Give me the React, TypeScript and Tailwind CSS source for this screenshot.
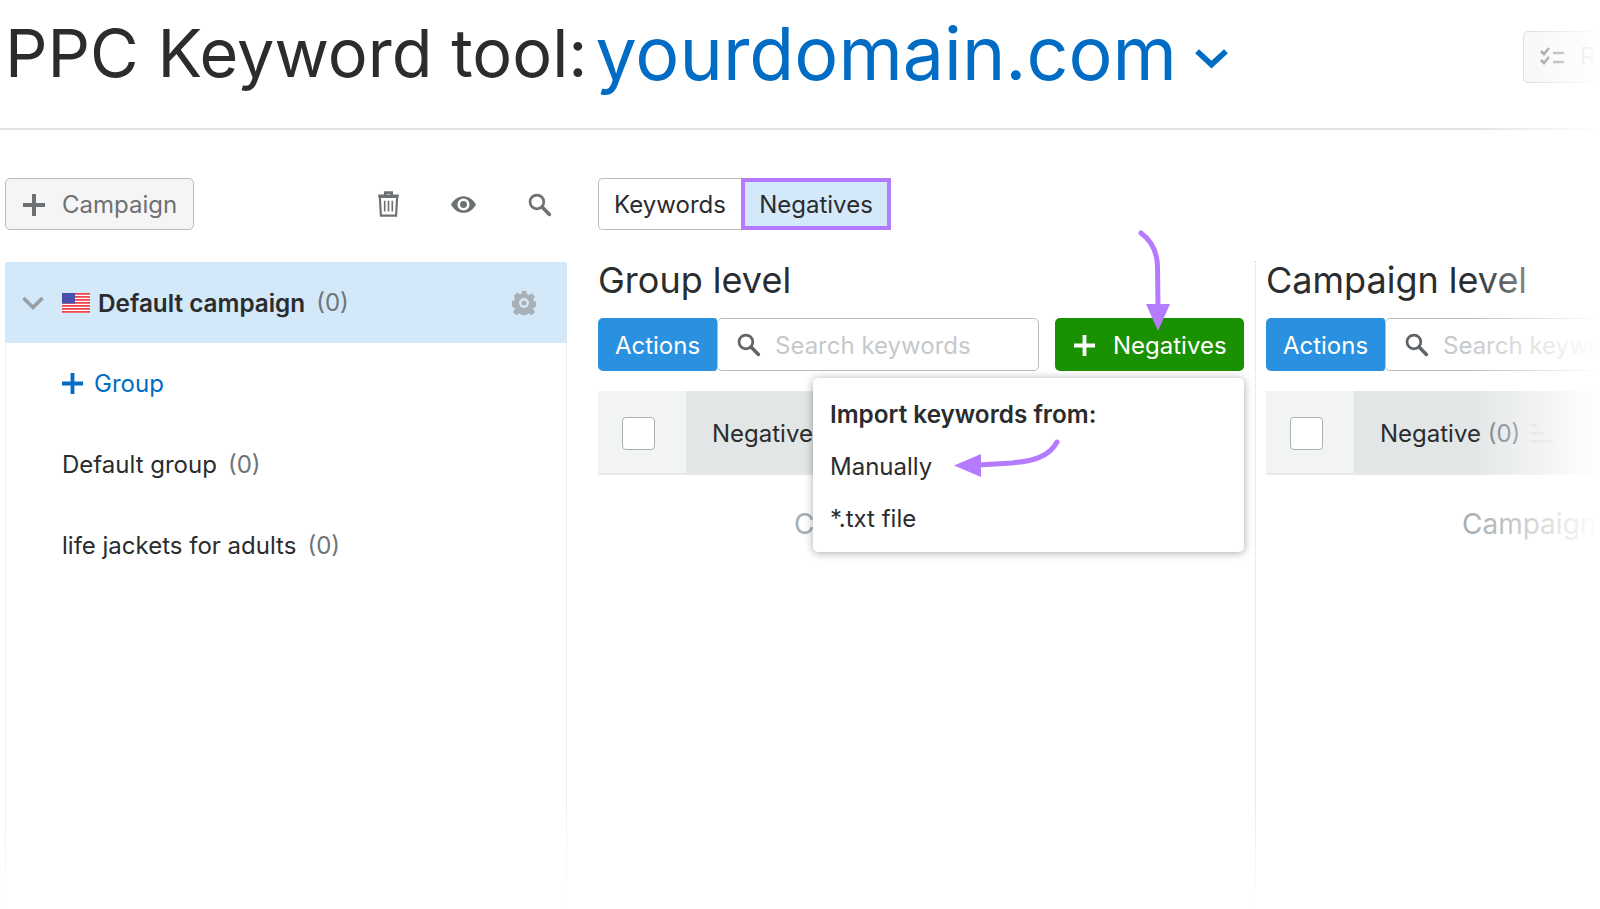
import React from "react";

const Search = ({ className = "" }: { className?: string }) => (
  <svg viewBox="0 0 24 24" className={className} fill="none" stroke="currentColor" strokeWidth="2.6">
    <circle cx="9.5" cy="9.5" r="6.6" />
    <path d="M14.5 14.5 21.5 21.5" strokeWidth="3.4" strokeLinecap="round" />
  </svg>
);

const Plus = ({ className = "" }: { className?: string }) => (
  <svg viewBox="0 0 22 22" className={className} fill="currentColor">
    <path d="M9 0h4v9h9v4h-9v9H9v-9H0V9h9z" />
  </svg>
);

const Flag = () => (
  <svg viewBox="0 0 28 20" className="w-[28px] h-[20px] shrink-0">
    <rect width="28" height="20" fill="#fff" />
    {[0, 3, 6, 9, 12, 15, 18].map((y) => (
      <rect key={y} y={y} width="28" height="1.8" fill="#f0474f" />
    ))}
    <rect width="13" height="10.5" fill="#4a51ad" />
  </svg>
);

function Toolbar({ plus }: { plus: boolean }) {
  return (
    <div className="flex items-stretch h-[53px]">
      <button className="w-[119px] shrink-0 pt-[2px] bg-[#2a90e0] text-white text-[24px] rounded-l-[5px] rounded-r-[3px]">Actions</button>
      <div className="w-[322px] flex items-center gap-[14px] pl-[18px] bg-white border border-[#b8bfc2] rounded-[5px] shrink-0">
        <Search className="w-[25px] h-[25px] text-[#5f6468] shrink-0" />
        <span className="pt-[2px] text-[24px] text-[#c6c9cb] whitespace-nowrap">Search keywords</span>
      </div>
      {plus && (
        <button className="ml-[16px] w-[189px] shrink-0 flex items-center gap-[18px] pl-[19px] pt-[2px] bg-[#1a9100] text-white text-[24px] rounded-[5px] whitespace-nowrap">
          <Plus className="w-[21px] h-[21px] shrink-0" />
          Negatives
        </button>
      )}
    </div>
  );
}

function TableHead({ sort }: { sort: boolean }) {
  return (
    <div className="flex h-[84px] mt-[20px] border-b-2 border-[#e6e8e9]">
      <div className="w-[88px] bg-[#f2f3f3] flex items-center pl-[24px] pt-[2px] shrink-0">
        <div className="w-[33px] h-[33px] bg-white border border-[#a9b0b3] rounded-[4px]" />
      </div>
      <div className="flex-1 bg-[#e3e6e7] flex items-center pl-[26px] pt-[4px] text-[24px] text-[#2a2c2e] whitespace-nowrap">
        Negative&nbsp;<span className="text-[#6f7477]">(0)</span>
        {sort && (
          <svg viewBox="0 0 22 20" className="w-[22px] h-[20px] ml-[11px]" fill="#cfd3d5">
            <rect x="0" y="0" width="6" height="3" />
            <rect x="0" y="8" width="13" height="3" />
            <rect x="0" y="16" width="22" height="3" />
          </svg>
        )}
      </div>
    </div>
  );
}

export default function App() {
  return (
    <div className="relative w-[1600px] h-[909px] overflow-hidden bg-white font-['Inter',sans-serif] text-[#2a2c2e]">
      {/* Header */}
      <header className="flex items-center h-[130px] pl-[5px] border-b-2 border-[#e2e2e2] pb-[20px]">
        <h1 className="text-[66.6px] leading-none font-normal whitespace-nowrap -mt-[2px]">PPC Keyword tool:</h1>
        <span className="ml-[8px] text-[73.5px] leading-none text-[#006cc4] whitespace-nowrap">yourdomain.com</span>
        <svg viewBox="0 0 32 20" className="w-[33px] h-[21px] ml-[18px] mt-[8px] text-[#006cc4]" fill="none" stroke="currentColor" strokeWidth="5.5">
          <path d="M2 3 16 16 30 3" />
        </svg>
        <div className="ml-auto w-[77px] h-[52px] mt-[5px] flex items-center gap-[16px] pl-[16px] border border-[#dcdfe0] rounded-l-[5px] bg-[#f8f8f8] text-[24px] text-[#b9bcbe] overflow-hidden shrink-0">
          <svg viewBox="0 0 24 20" className="w-[24px] h-[20px] shrink-0" fill="none" stroke="#9a9fa2" strokeWidth="2.6">
            <path d="M1 4 4 7 9 1M1 13 4 16 9 10" />
            <path d="M13 6h11M13 15h11" />
          </svg>
          R
        </div>
      </header>

      <main className="flex pl-[5px] pt-[48px]">
        {/* Left column */}
        <aside className="w-[562px] shrink-0">
          <div className="flex items-center h-[52px]">
            <button className="w-[189px] h-[52px] flex items-center gap-[17px] pl-[17px] pt-[1px] bg-[#f5f5f5] border border-[#b9bdbf] rounded-[5px] text-[24px] text-[#6d7174]">
              <Plus className="w-[22px] h-[22px] text-[#6d7174] shrink-0" />
              Campaign
            </button>
            <svg viewBox="0 0 20 24" className="w-[23px] h-[26px] ml-[183px] text-[#6d7174]" fill="none" stroke="currentColor" strokeWidth="2">
              <path d="M0.500 4.500h19M7 4V1.500h6V4" strokeWidth="2.400" />
              <path d="M2 5.500 3 22.800h14l1-17.300z" />
              <path d="M6.500 9v10M10 9v10M13.500 9v10" strokeWidth="1.500" />
            </svg>
            <svg viewBox="0 0 24 16" className="w-[25px] h-[17px] ml-[51px] text-[#6d7174]" fill="currentColor">
              <path fillRule="evenodd" d="M12 0c5.400 0 9.600 3.600 12 8-2.400 4.400-6.600 8-12 8S2.400 12.400 0 8C2.400 3.600 6.600 0 12 0zm0 2.200A5.800 5.800 0 1 0 12 13.800 5.800 5.800 0 0 0 12 2.200z" />
              <circle cx="12" cy="8" r="3.300" />
            </svg>
            <Search className="w-[25px] h-[25px] ml-[51px] text-[#6d7174]" />
          </div>

          <div className="mt-[32px] h-[670px] border-x border-[#eef0f1]">
            <div className="flex items-center h-[81px] -mx-px pl-[17px] bg-[#d3e8f8] rounded-t-[3px]">
              <svg viewBox="0 0 22 14" className="w-[22px] h-[14px] mr-[18px] text-[#9a9fa2]" fill="none" stroke="currentColor" strokeWidth="3.600">
                <path d="M1.500 2 11 11.500 20.500 2" />
              </svg>
              <Flag />
              <span className="ml-[8px] pt-[1px] text-[24.300px] font-semibold">Default campaign</span>
              <span className="ml-[11px] pt-[1px] text-[24px] text-[#6f7477]">(0)</span>
              <svg viewBox="0 0 24 24" className="w-[24px] h-[24px] ml-auto mr-[31px] text-[#a9b1b6]" fill="currentColor">
                <path fillRule="evenodd" d="M9.700 0h4.600l.7 3.300 1.900.8 2.900-1.800 3.200 3.200-1.800 2.900.8 1.900 3 .7v4.600l-3 .7-.8 1.900 1.800 2.900-3.200 3.200-2.900-1.800-1.900.8-.7 3h-4.600l-.7-3-1.900-.8-2.900 1.800-3.200-3.200 1.800-2.900-.8-1.900-3-.7V10.200l3-.7.8-1.900L1.900 4.700 5.100 1.500 8 3.300l1.900-.8zM12 7a5 5 0 1 0 0 10 5 5 0 0 0 0-10z" />
                <circle cx="12" cy="12" r="2.500" />
              </svg>
            </div>
            <div className="flex items-center h-[81px] pl-[56px] gap-[11px] text-[24px] text-[#006cc4]">
              <Plus className="w-[21px] h-[21px] shrink-0" />
              Group
            </div>
            <div className="flex items-center h-[81px] pl-[56px] text-[24px]">
              Default group<span className="ml-[11px] text-[#6f7477]">(0)</span>
            </div>
            <div className="flex items-center h-[81px] pl-[56px] text-[24px]">
              life jackets for adults<span className="ml-[11px] text-[#6f7477]">(0)</span>
            </div>
          </div>
        </aside>

        {/* Right area */}
        <div className="ml-[31px] flex-1 min-w-0">
          <div className="flex h-[52px]">
            <div className="w-[143px] flex items-center justify-center pt-[1px] bg-white border border-[#b9bdbf] border-r-0 rounded-l-[5px] text-[24px]">Keywords</div>
            <div className="w-[150px] flex items-center justify-center pt-[1px] bg-[#d3e8f8] border-[4px] border-[#b57bff] text-[24px]">Negatives</div>
          </div>

          <div className="flex mt-[31px]">
            <section className="w-[657px] shrink-0 pr-[11px]">
              <h2 className="h-[38px] text-[36px] leading-[38px] font-normal">Group level</h2>
              <div className="mt-[19px]"><Toolbar plus /></div>
              <TableHead sort={false} />
              <div className="mt-[28px] pl-[196px] text-[28px] text-[#a9aeb1]">C</div>
            </section>
            <section className="flex-1 min-w-0 border-l border-dotted border-[#d5d8da] pl-[10px] h-[660px]">
              <h2 className="h-[38px] text-[36px] leading-[38px] font-normal whitespace-nowrap">Campaign level</h2>
              <div className="mt-[19px]"><Toolbar plus={false} /></div>
              <TableHead sort />
              <div className="mt-[28px] pl-[196px] text-[28px] text-[#a9aeb1] whitespace-nowrap">Campaign</div>
            </section>
          </div>
        </div>
      </main>

      {/* Fades over the right and bottom edges */}
      <div className="absolute top-[100px] bottom-0 right-0 w-[130px] bg-gradient-to-r from-white/0 to-white" />
      <div className="absolute top-[10px] right-0 w-[70px] h-[90px] bg-gradient-to-r from-white/0 to-white" />
      <div className="absolute left-0 right-0 bottom-0 h-[100px] bg-gradient-to-b from-white/0 to-white" />

      {/* Dropdown */}
      <div className="absolute left-[813px] top-[378px] w-[431px] h-[174px] bg-white rounded-[5px] shadow-[0_1px_8px_rgba(0,0,0,0.35)] pl-[17px] text-[24px]">
        <div className="h-[36px] mt-[18px] leading-[36px] text-[24.300px] font-semibold">Import keywords from:</div>
        <div className="mt-[17px] h-[36px] leading-[36px]">Manually</div>
        <div className="mt-[16px] h-[36px] leading-[36px]">*.txt file</div>
      </div>

      {/* Annotation arrows */}
      <svg className="absolute left-[1130px] top-[225px] w-[50px] h-[110px]" viewBox="1130 225 50 110" fill="none">
        <path d="M1141 233C1152 241 1157 252 1157.500 266L1158 306" stroke="#b57bff" strokeWidth="5" strokeLinecap="round" />
        <path d="M1146 304H1170L1158 331z" fill="#b57bff" />
      </svg>
      <svg className="absolute left-[945px] top-[432px] w-[125px] h-[55px]" viewBox="945 432 125 55" fill="none">
        <path d="M1057 442C1049 457 1033 461 1012 463L978 465" stroke="#b57bff" strokeWidth="5" strokeLinecap="round" />
        <path d="M954 465.500 981 454V477z" fill="#b57bff" />
      </svg>
    </div>
  );
}
